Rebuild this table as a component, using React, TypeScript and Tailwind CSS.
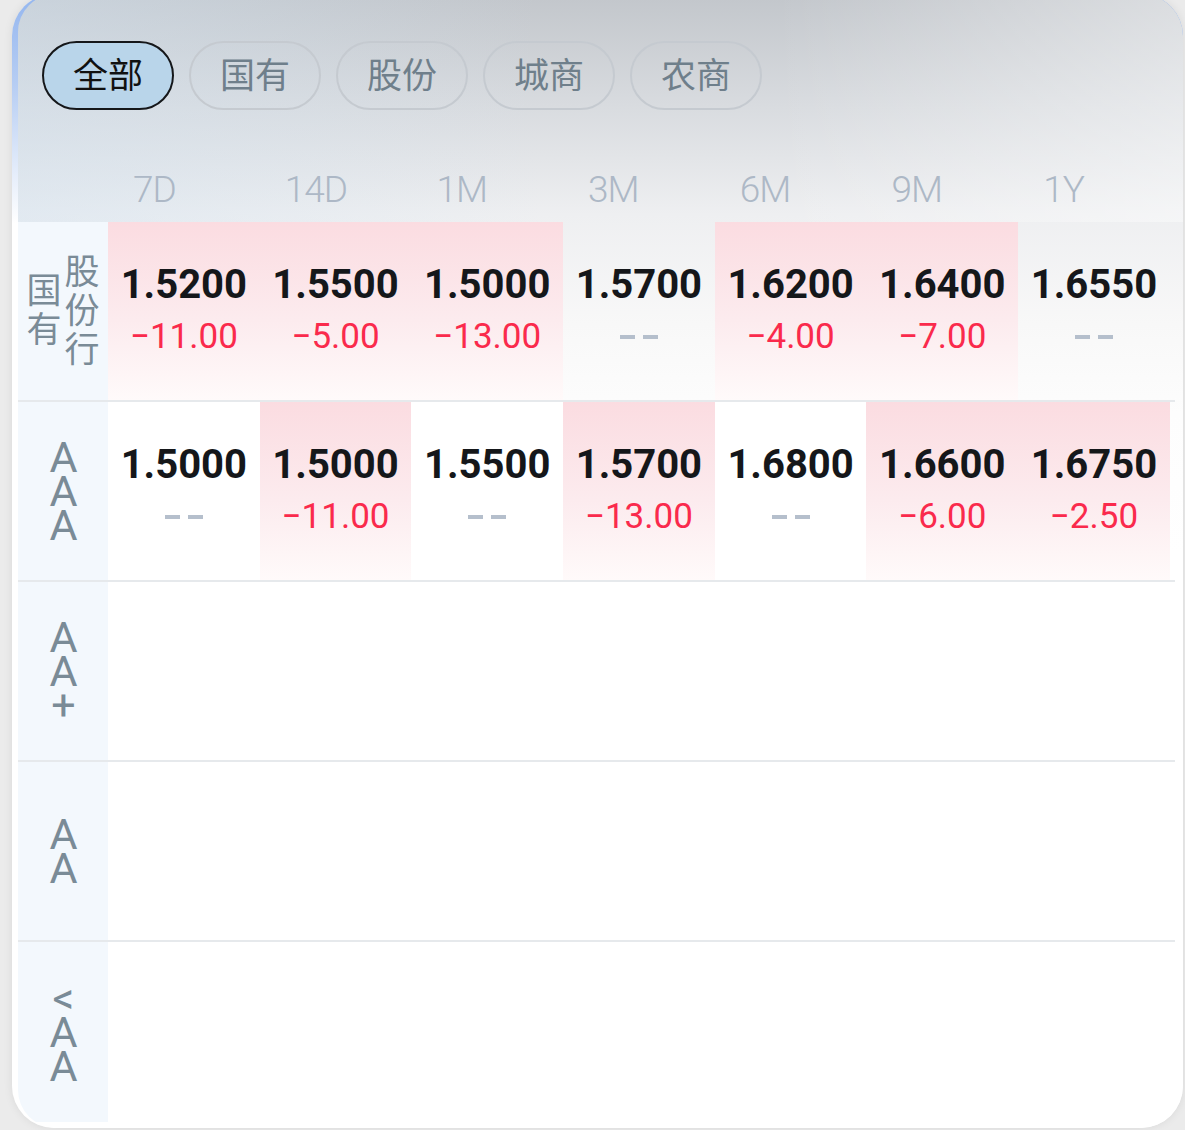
import React from 'react';

const tabs = ['全部', '国有', '股份', '城商', '农商'];
const periods = ['7D', '14D', '1M', '3M', '6M', '9M', '1Y'];

type Cell = { rate: string; bp?: string; hot?: boolean } | null;

const rows: { label: React.ReactNode; cells: Cell[]; first?: boolean }[] = [
  {
    first: true,
    label: (
      <div className="flex items-center gap-[3px]">
        <div className="flex flex-col items-center">
          <span>国</span>
          <span>有</span>
        </div>
        <div className="flex flex-col items-center">
          <span>股</span>
          <span>份</span>
          <span>行</span>
        </div>
      </div>
    ),
    cells: [
      { rate: '1.5200', bp: '−11.00', hot: true },
      { rate: '1.5500', bp: '−5.00', hot: true },
      { rate: '1.5000', bp: '−13.00', hot: true },
      { rate: '1.5700' },
      { rate: '1.6200', bp: '−4.00', hot: true },
      { rate: '1.6400', bp: '−7.00', hot: true },
      { rate: '1.6550' },
    ],
  },
  {
    label: 'AAA',
    cells: [
      { rate: '1.5000' },
      { rate: '1.5000', bp: '−11.00', hot: true },
      { rate: '1.5500' },
      { rate: '1.5700', bp: '−13.00', hot: true },
      { rate: '1.6800' },
      { rate: '1.6600', bp: '−6.00', hot: true },
      { rate: '1.6750', bp: '−2.50', hot: true },
    ],
  },
  { label: 'AA+', cells: [null, null, null, null, null, null, null] },
  { label: 'AA', cells: [null, null, null, null, null, null, null] },
  { label: '<AA', cells: [null, null, null, null, null, null, null] },
];

function RowLabel({ label, first }: { label: React.ReactNode; first?: boolean }) {
  if (first) {
    return <div className="text-[35px] leading-[39px] text-[#7a8b97]">{label}</div>;
  }
  // stacked letters, one text run
  return (
    <div className="pb-[16px] text-[43px] leading-[43px] tracking-[-16px] text-[#7a8b97] [text-orientation:upright] [writing-mode:vertical-lr]">
      {String(label)}
    </div>
  );
}

function RateCell({ cell, first }: { cell: Cell; first?: boolean }) {
  const bg = cell?.hot
    ? 'bg-[linear-gradient(180deg,#fbdce1_0%,#fcebee_55%,#fffafa_100%)]'
    : first
      ? ''
      : 'bg-white';
  return (
    <div className={`flex w-[151.7px] shrink-0 flex-col items-center justify-center ${cell ? bg : ''}`}>
      {cell && (
        <>
          <div className="text-[40px] font-bold leading-[52px] text-[#15171a]">{cell.rate}</div>
          {cell.bp ? (
            <div className="text-[35px] leading-[52px] text-[#fa2a4c]">{cell.bp}</div>
          ) : (
            <div className="flex h-[52px] items-center gap-[8px]">
              <div className="h-[4px] w-[15px] bg-[#b5bfcc]" />
              <div className="h-[4px] w-[15px] bg-[#b5bfcc]" />
            </div>
          )}
        </>
      )}
    </div>
  );
}

export default function App() {
  return (
    <div className="h-[1130px] overflow-hidden bg-[#ebebeb] pl-[12px] pr-[2px] font-['Roboto','Noto_Sans_CJK_SC',sans-serif]">
      <div className="-mt-[6px] h-[1134px] overflow-hidden rounded-[42px] bg-[linear-gradient(180deg,#94b6ef_0px,#b6cdf3_90px,#ffffff_230px)] pl-[6px] shadow-[0_0_10px_rgba(0,0,0,0.08)]">
        <div className="h-full overflow-hidden rounded-l-[38px] rounded-r-[42px] bg-[linear-gradient(180deg,#c2c6cb_0px,#d8dbdf_110px,#eeeff1_220px,#f8f8f8_330px,#fdfdfd_420px,#ffffff_560px)] pb-[6px]">
          <div className="bg-[linear-gradient(90deg,rgba(210,226,240,0.45)_0%,rgba(210,226,240,0)_45%,rgba(255,255,255,0)_65%,rgba(255,255,255,0.4)_100%)]">
            <div className="flex gap-[15px] pt-[47px] pl-[24px]">
              {tabs.map((t, i) => (
                <div
                  key={t}
                  className={
                    i === 0
                      ? 'flex h-[69px] w-[132px] items-center justify-center rounded-full border-2 border-[#15171a] bg-[#b9d5ea] pt-[3px] text-[35px] text-[#111]'
                      : 'flex h-[69px] w-[132px] items-center justify-center rounded-full border-2 border-[#c5cad0] pt-[3px] text-[35px] text-[#6f7f8b]'
                  }
                >
                  {t}
                </div>
              ))}
            </div>
            <div className="mt-[48px] flex h-[64px] items-center pl-[90px]">
              {periods.map((p) => (
                <div key={p} className="w-[151.7px] shrink-0 pl-[25px] text-[37px] font-light tracking-[-1px] text-[#adb8c6]">
                  {p}
                </div>
              ))}
            </div>
          </div>
          {rows.map((r, ri) => (
            <div
              key={ri}
              className={`mr-[8px] flex h-[180px] ${ri < rows.length - 1 ? 'border-b-2 border-[#e6e9ec]' : ''}`}
            >
              <div className="flex w-[90px] shrink-0 items-center justify-center bg-[#f3f8fd]">
                <RowLabel label={r.label} first={r.first} />
              </div>
              {r.cells.map((c, ci) => (
                <RateCell key={ci} cell={c} first={r.first} />
              ))}
            </div>
          ))}
        </div>
      </div>
    </div>
  );
}
